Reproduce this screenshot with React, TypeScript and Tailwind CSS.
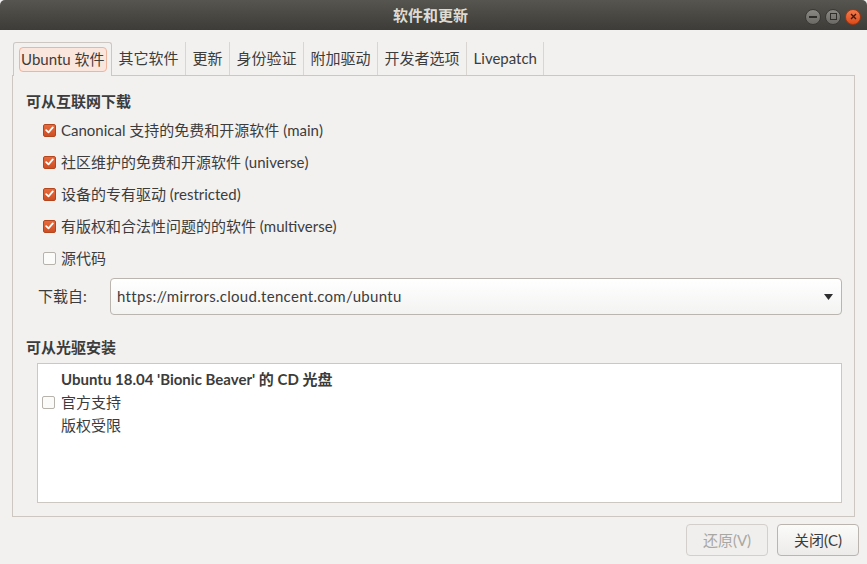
import React from "react";

const font = "font-['Lato','Noto_Sans_CJK_SC',sans-serif]";

function Check({ on }: { on: boolean }) {
  if (!on) {
    return <span className="block w-[13px] h-[13px] rounded-[2px] border border-[#b6b2ac] bg-[#fbfbfa]" />;
  }
  return (
    <span className="flex items-center justify-center w-[13px] h-[13px] rounded-[2px] border border-[#b3461f] bg-linear-to-b from-[#e76a3d] to-[#cd4f22]">
      <svg width="9" height="8" viewBox="0 0 9 8">
        <path d="M1.2 4.2 L3.5 6.4 L7.8 1.4" fill="none" stroke="#fff" strokeWidth="1.8" strokeLinecap="round" strokeLinejoin="round" />
      </svg>
    </span>
  );
}

function Row({ on, label }: { on: boolean; label: string }) {
  return (
    <div className="flex items-center h-[32px] pl-[17px] gap-[5px]">
      <Check on={on} />
      <span>{label}</span>
    </div>
  );
}

const tabs = ["其它软件", "更新", "身份验证", "附加驱动", "开发者选项", "Livepatch"];

export default function App() {
  return (
    <div className={`w-[867px] h-[564px] flex flex-col bg-[#f2f1f0] text-[#3c3c3c] text-[15px] ${font}`}>
      {/* title bar */}
      <div className="h-[30px] flex items-center bg-linear-to-b from-[#56554f] to-[#3d3c38] rounded-t-[5px]">
        <div className="flex-1" />
        <div className="text-[#dfdbd2] font-bold text-[15px]">软件和更新</div>
        <div className="flex-1 flex justify-end items-center gap-[4px] pr-[6px] pt-[3px]">
          <span className="flex items-center justify-center w-[16px] h-[16px] rounded-full border border-[#3a3935] bg-linear-to-b from-[#8a8984] to-[#6a6964]">
            <span className="block w-[8px] h-[2px] bg-[#2f2e2b]" />
          </span>
          <span className="flex items-center justify-center w-[16px] h-[16px] rounded-full border border-[#3a3935] bg-linear-to-b from-[#8a8984] to-[#6a6964]">
            <span className="block w-[7px] h-[7px] border border-[#2f2e2b]" />
          </span>
          <span className="flex items-center justify-center w-[16px] h-[16px] rounded-full border border-[#9e3612] bg-linear-to-b from-[#f47a4a] to-[#dc4a16]">
            <svg width="7" height="7" viewBox="0 0 7 7">
              <path d="M1 1 L6 6 M6 1 L1 6" stroke="#3a1a0c" strokeWidth="1.3" />
            </svg>
          </span>
        </div>
      </div>

      {/* body */}
      <div className="flex-1 flex flex-col px-[12px] pt-[12px]">
        {/* tabs */}
        <div className="flex h-[33px] items-stretch">
          <div className="relative z-10 ml-[1px] -mb-px h-[34px] flex items-start pt-[4px] pl-[5px] pr-[4px] border border-b-0 border-[#cdc7c2] rounded-t-[3px] bg-[#f2f1f0]">
            <div className="h-[25px] flex items-center px-[1px] rounded-[4px] border border-[#efb49c] bg-[#fbe6dd]">
              Ubuntu 软件
            </div>
          </div>
          {tabs.map((t) => (
            <div key={t} className="flex items-center pl-[7px] pr-[6px] border-r border-[#d9d6d1]">
              {t}
            </div>
          ))}
        </div>

        {/* panel */}
        <div className="h-[442px] flex flex-col border border-[#cdc7c2] pl-[13px] pr-[12px] pt-[12px]">
          <div className="font-bold leading-[26px] h-[26px]">可从互联网下载</div>
          <Row on label="Canonical 支持的免费和开源软件 (main)" />
          <Row on label="社区维护的免费和开源软件 (universe)" />
          <Row on label="设备的专有驱动 (restricted)" />
          <Row on label="有版权和合法性问题的的软件 (multiverse)" />
          <Row on={false} label="源代码" />

          <div className="flex items-center mt-[4px] h-[37px]">
            <span className="w-[84px] pl-[12px]">下载自:</span>
            <div className="flex-1 h-[37px] flex items-center justify-between pl-[6px] pr-[8px] rounded-[4px] border border-[#bab5af] bg-linear-to-b from-[#ffffff] to-[#f3f3f2]">
              <span className="tracking-[0.3px]">https://mirrors.cloud.tencent.com/ubuntu</span>
              <svg width="9" height="6" viewBox="0 0 9 6">
                <path d="M0 0 L9 0 L4.5 6 Z" fill="#2e2e2e" />
              </svg>
            </div>
          </div>

          <div className="font-bold leading-[26px] h-[26px] mt-[19px]">可从光驱安装</div>
          <div className="mt-[3px] ml-[11px] h-[140px] border border-[#cdc7c2] bg-white flex items-start pt-[3px]">
            <div className="flex items-center gap-[6px] pl-[4px] h-[70px]">
              <span className="pt-[1px]">
                <Check on={false} />
              </span>
              <div className="flex flex-col">
                <span className="font-bold leading-[23px]">Ubuntu 18.04 'Bionic Beaver' 的 CD 光盘</span>
                <span className="leading-[23px]">官方支持</span>
                <span className="leading-[23px]">版权受限</span>
              </div>
            </div>
          </div>
        </div>

        {/* buttons */}
        <div className="flex justify-end gap-[9px] mt-[7px] mb-[8px] -mr-[4px]">
          <button className="w-[82px] h-[32px] rounded-[4px] border border-[#d3cfca] bg-[#f0efee] text-[#a9a7a3]">
            还原(V)
          </button>
          <button className="w-[82px] h-[32px] rounded-[4px] border border-[#bab5af] bg-linear-to-b from-[#fbfbfa] to-[#ecebea] text-[#3c3c3c]">
            关闭(C)
          </button>
        </div>
      </div>
    </div>
  );
}
